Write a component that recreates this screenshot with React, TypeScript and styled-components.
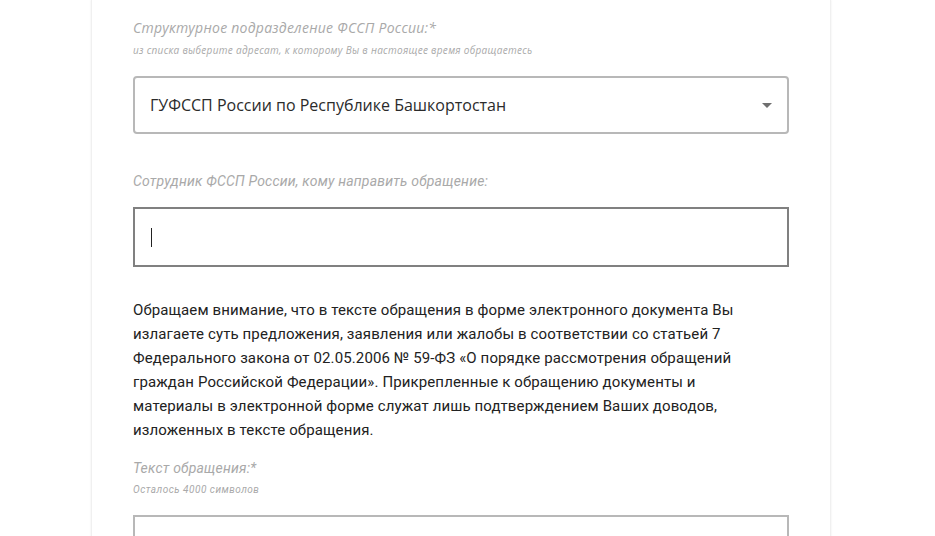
import React from 'react';
import styled, { createGlobalStyle } from 'styled-components';

const GlobalStyle = createGlobalStyle`
  html, body {
    margin: 0;
    padding: 0;
    background: #fff;
  }
  body {
    font-family: 'Roboto', 'Noto Sans', sans-serif;
    overflow: hidden;
  }
`;

const Page = styled.div`
  width: 935px;
  height: 536px;
  overflow: hidden;
  background: #fff;
`;

const Card = styled.section`
  width: 740px;
  margin-left: 91px;
  min-height: 600px;
  box-sizing: border-box;
  padding: 19px 41px 0;
  background: #fff;
  box-shadow: 0 0 2px rgba(0, 0, 0, 0.08);
  border-left: 1px solid #f0f0f0;
  border-right: 1px solid #f0f0f0;
`;

const Field = styled.div<{ $gap?: number }>`
  margin-top: ${({ $gap }) => $gap ?? 0}px;
  display: flex;
  flex-direction: column;
`;

// the first block uses a wider face than the rest of the form
const Label = styled.label<{ $wide?: boolean }>`
  font-family: ${({ $wide }) => ($wide ? "'Open Sans'" : "'Roboto'")}, sans-serif;
  font-style: italic;
  font-size: 14px;
  line-height: 18px;
  color: #a9a9a9;
  letter-spacing: ${({ $wide }) => ($wide ? '0.25px' : '0.2px')};
`;

const Hint = styled.span<{ $wide?: boolean }>`
  margin-top: 6px;
  font-family: ${({ $wide }) => ($wide ? "'Open Sans'" : "'Roboto'")}, sans-serif;
  font-style: italic;
  font-size: 10px;
  line-height: 14px;
  color: #a9a9a9;
  letter-spacing: ${({ $wide }) => ($wide ? '0.3px' : '0.5px')};
`;

const SelectBox = styled.div`
  margin-top: 19px;
  height: 58px;
  box-sizing: border-box;
  border: 2px solid #b8b8b8;
  border-radius: 4px;
  display: flex;
  align-items: center;
  justify-content: space-between;
  padding: 0 15px 0 15px;
  font-family: 'Open Sans', sans-serif;
  font-size: 16px;
  color: #2b2b2b;
`;

const Arrow = styled.span`
  width: 0;
  height: 0;
  border-left: 5px solid transparent;
  border-right: 5px solid transparent;
  border-top: 5px solid #6f6f6f;
  margin-top: 1px;
`;

const TextInput = styled.div<{ $top?: number; $color?: string; $height?: number }>`
  margin-top: ${({ $top }) => $top ?? 17}px;
  height: ${({ $height }) => $height ?? 60}px;
  box-sizing: border-box;
  border: 2px solid ${({ $color }) => $color ?? '#808080'};
  display: flex;
  align-items: center;
  padding-left: 16px;
`;

const Caret = styled.span`
  width: 1px;
  height: 19px;
  background: #222;
`;

const Notice = styled.p`
  margin: 31px 0 0;
  font-family: 'Roboto', sans-serif;
  font-size: 15px;
  line-height: 24px;
  color: #222;
  letter-spacing: 0.12px;
`;

const noticeLines = [
  'Обращаем внимание, что в тексте обращения в форме электронного документа Вы',
  'излагаете суть предложения, заявления или жалобы в соответствии со статьей 7',
  'Федерального закона от 02.05.2006 № 59-ФЗ «О порядке рассмотрения обращений',
  'граждан Российской Федерации». Прикрепленные к обращению документы и',
  'материалы в электронной форме служат лишь подтверждением Ваших доводов,',
  'изложенных в тексте обращения.',
];

export default function App() {
  return (
    <Page>
      <GlobalStyle />
      <Card>
        <Field>
          <Label $wide>Структурное подразделение ФССП России:*</Label>
          <Hint $wide>из списка выберите адресат, к которому Вы в настоящее время обращаетесь</Hint>
          <SelectBox>
            <span>ГУФССП России по Республике Башкортостан</span>
            <Arrow />
          </SelectBox>
        </Field>
        <Field $gap={38}>
          <Label>Сотрудник ФССП России, кому направить обращение:</Label>
          <TextInput>
            <Caret />
          </TextInput>
        </Field>
        <Notice>
          {noticeLines.map((line, i) => (
            <React.Fragment key={i}>
              {line}
              {i < noticeLines.length - 1 && <br />}
            </React.Fragment>
          ))}
        </Notice>
        <Field $gap={17}>
          <Label>Текст обращения:*</Label>
          <Hint>Осталось 4000 символов</Hint>
          <TextInput $top={18} $color="#b8b8b8" $height={120} />
        </Field>
      </Card>
    </Page>
  );
}
